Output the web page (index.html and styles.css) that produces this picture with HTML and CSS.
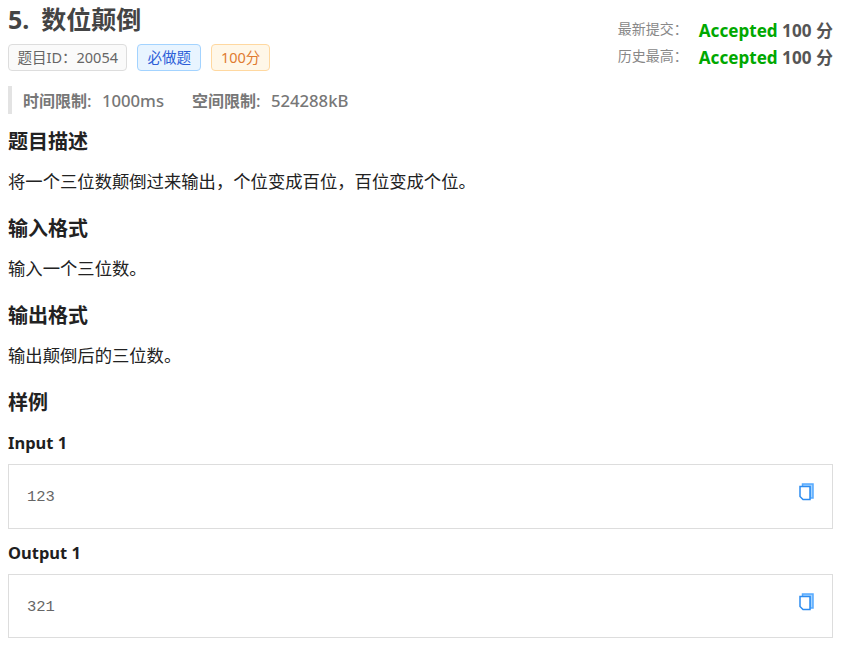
FILE: index.html
```html
<!DOCTYPE html>
<html lang="zh-CN">
<head>
    <meta charset="utf-8"/>
    <title>数位颠倒</title>
    <link rel="stylesheet" href="styles.css">
</head>
<body>
    <div class="header">
        <div>
            <h1 class="title">5.<span class="title-name">数位颠倒</span></h1>
            <div class="tags">
                <span class="tag tag-grey">题目ID：20054</span>
                <span class="tag tag-blue">必做题</span>
                <span class="tag tag-orange">100分</span>
            </div>
        </div>
        <div class="scores">
            <div class="score-row">
                <span class="score-label">最新提交：</span>
                <span class="score-value"><span class="accepted">Accepted</span> 100 分</span>
            </div>
            <div class="score-row">
                <span class="score-label">历史最高：</span>
                <span class="score-value"><span class="accepted">Accepted</span> 100 分</span>
            </div>
        </div>
    </div>

    <div class="limits">
        <span class="limit"><b>时间限制</b>: 1000ms</span>
        <span class="limit"><b>空间限制</b>: 524288kB</span>
    </div>

    <h2>题目描述</h2>
    <p>将一个三位数颠倒过来输出，个位变成百位，百位变成个位。</p>
    <h2>输入格式</h2>
    <p>输入一个三位数。</p>
    <h2>输出格式</h2>
    <p>输出颠倒后的三位数。</p>
    <h2>样例</h2>

    <h3>Input 1</h3>
    <div class="sample">
        <code>123</code>
        <svg class="copy" width="15" height="18" viewBox="0 0 15 18">
            <path d="M3.5 1h10.5v14h-3v-11h-7.500z" fill="#a5d4ff" stroke="#55a9ff" stroke-width="1.500"/>
            <path d="M1 3.500h10v13h-7l-3-3z" fill="#fff" stroke="#2d8cf0" stroke-width="1.500"/>
        </svg>
    </div>
    <h3>Output 1</h3>
    <div class="sample">
        <code>321</code>
        <svg class="copy" width="15" height="18" viewBox="0 0 15 18">
            <path d="M3.5 1h10.5v14h-3v-11h-7.500z" fill="#a5d4ff" stroke="#55a9ff" stroke-width="1.500"/>
            <path d="M1 3.500h10v13h-7l-3-3z" fill="#fff" stroke="#2d8cf0" stroke-width="1.500"/>
        </svg>
    </div>
</body>
</html>
```

FILE: styles.css
```css
html, body {
    margin: 0;
    padding: 0;
}
body {
    padding: 0 12px 0 8px;
    font-family: "Noto Sans", "Noto Sans CJK SC", sans-serif;
    font-size: 16px;
    color: #333;
    background: #fff;
    overflow: hidden;
}
.header {
    display: flex;
    justify-content: space-between;
}
.title {
    margin: 0;
    height: 44px;
    font-size: 25px;
    line-height: 38px;
    font-weight: 700;
    color: #444;
}
.title-name {
    margin-left: 12px;
}
.tags {
    display: flex;
    gap: 10px;
    height: 28px;
}
.tag {
    box-sizing: border-box;
    height: 27px;
    padding: 0 8.5px;
    border: 1px solid #ddd;
    border-radius: 4px;
    font-size: 14.5px;
    line-height: 25px;
}
.tag-grey {
    background: #fafafa;
    color: #666;
}
.tag-blue {
    background: #e8f4ff;
    border-color: #a3d3ff;
    color: #2d5fd8;
    padding: 0 9px;
}
.tag-orange {
    background: #fff7e8;
    border-color: #ffd8a0;
    color: #e07b30;
    padding: 0 9px;
}
.scores {
    padding-top: 16px;
}
.score-row {
    display: flex;
    align-items: center;
    height: 27px;
}
.score-label {
    width: 81px;
    margin-top: -4px;
    font-size: 14px;
    color: #888;
}
.score-value {
    font-size: 17.1px;
    font-weight: 700;
    color: #555;
}
.accepted {
    color: #00a800;
}
.limits {
    display: flex;
    gap: 28px;
    margin-top: 14px;
    padding-left: 11px;
    height: 28px;
    border-left: 4px solid #e3e3e3;
    font-size: 16.7px;
    line-height: 30px;
    color: #777;
    font-weight: 500;
    word-spacing: 6px;
}
.limit b {
    font-size: 16px;
    font-weight: 700;
}
h2 {
    margin: 12px 0 0;
    font-size: 20px;
    line-height: 32px;
    font-weight: 700;
    color: #222;
}
p {
    margin: 10px 0 19px;
    font-size: 17.33px;
    line-height: 26px;
    color: #222;
}
h3 {
    margin: 12px 0 9px;
    font-size: 16.5px;
    line-height: 24px;
    font-weight: 700;
    color: #1f1f1f;
}
.sample {
    box-sizing: border-box;
    display: flex;
    justify-content: space-between;
    height: 65px;
    margin-bottom: 1px;
    padding: 16px 18px 0;
    border: 1px solid #ddd;
}
.sample:last-child {
    height: 64px;
}
code {
    font-family: "Liberation Mono", monospace;
    font-size: 15.5px;
    line-height: 32px;
    color: #666;
}
.copy {
    margin-top: 2px;
}
```
